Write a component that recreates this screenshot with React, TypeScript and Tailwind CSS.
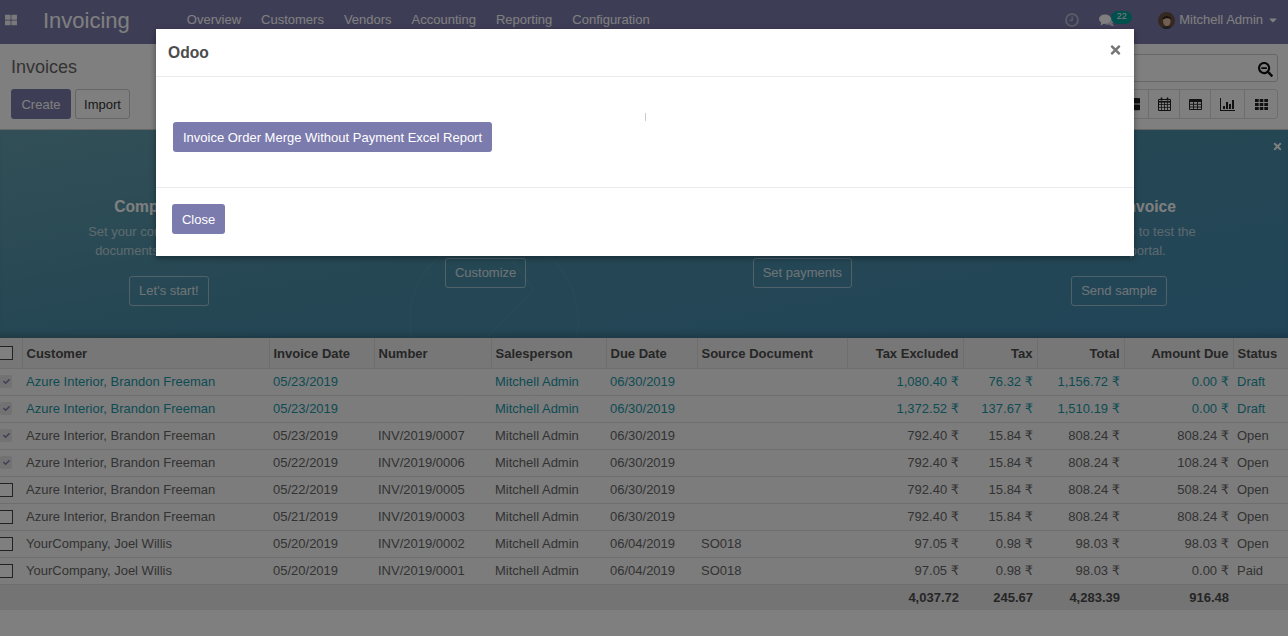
import { FaThLarge, FaSearchMinus, FaTimes, FaCheck, FaCaretDown } from "react-icons/fa";

const menu = ["Overview", "Customers", "Vendors", "Accounting", "Reporting", "Configuration"];

const columns = [
  { label: "Customer", width: 247 },
  { label: "Invoice Date", width: 105 },
  { label: "Number", width: 117 },
  { label: "Salesperson", width: 115 },
  { label: "Due Date", width: 91 },
  { label: "Source Document", width: 150 },
  { label: "Tax Excluded", width: 116, right: true },
  { label: "Tax", width: 74, right: true },
  { label: "Total", width: 87, right: true },
  { label: "Amount Due", width: 109, right: true },
  { label: "Status", width: 55 },
];

const azure = "Azure Interior, Brandon Freeman";
const joel = "YourCompany, Joel Willis";

const rows = [
  { checked: true, draft: true, cells: [azure, "05/23/2019", "", "Mitchell Admin", "06/30/2019", "", "1,080.40 ₹", "76.32 ₹", "1,156.72 ₹", "0.00 ₹", "Draft"] },
  { checked: true, draft: true, cells: [azure, "05/23/2019", "", "Mitchell Admin", "06/30/2019", "", "1,372.52 ₹", "137.67 ₹", "1,510.19 ₹", "0.00 ₹", "Draft"] },
  { checked: true, cells: [azure, "05/23/2019", "INV/2019/0007", "Mitchell Admin", "06/30/2019", "", "792.40 ₹", "15.84 ₹", "808.24 ₹", "808.24 ₹", "Open"] },
  { checked: true, cells: [azure, "05/22/2019", "INV/2019/0006", "Mitchell Admin", "06/30/2019", "", "792.40 ₹", "15.84 ₹", "808.24 ₹", "108.24 ₹", "Open"] },
  { cells: [azure, "05/22/2019", "INV/2019/0005", "Mitchell Admin", "06/30/2019", "", "792.40 ₹", "15.84 ₹", "808.24 ₹", "508.24 ₹", "Open"] },
  { cells: [azure, "05/21/2019", "INV/2019/0003", "Mitchell Admin", "06/30/2019", "", "792.40 ₹", "15.84 ₹", "808.24 ₹", "808.24 ₹", "Open"] },
  { cells: [joel, "05/20/2019", "INV/2019/0002", "Mitchell Admin", "06/04/2019", "SO018", "97.05 ₹", "0.98 ₹", "98.03 ₹", "98.03 ₹", "Open"] },
  { cells: [joel, "05/20/2019", "INV/2019/0001", "Mitchell Admin", "06/04/2019", "SO018", "97.05 ₹", "0.98 ₹", "98.03 ₹", "0.00 ₹", "Paid"] },
];

const onboarding = [
  { title: "Company Data", lines: ["Set your company's data for", "documents header/footer."], action: "Let's start!" },
  { title: "Invoice Layout", lines: ["Customize the look of your", ""], action: "Customize", short: true },
  { title: "Payment Method", lines: ["Set up your payment methods", ""], action: "Set payments", short: true },
  { title: "Sample Invoice", lines: ["Send an invoice to test the", "customer portal."], action: "Send sample" },
];

const Unchecked = () => <div className="-ml-px h-[14px] w-[14px] border border-[#444] bg-white" />;

const Checked = () => (
  <div className="flex h-[13px] w-[12px] items-center justify-center rounded-[2px] bg-[#e4e4e4] text-[#7c7bad]">
    <FaCheck className="h-[7px] w-[7px]" />
  </div>
);

// amounts carry the rupee sign in a wider face than the digits
function Cell({ value }: { value: string }) {
  if (!value.endsWith(" ₹")) return <>{value}</>;
  return (
    <>
      {value.slice(0, -1)}
      <span className="font-['DejaVu_Sans',sans-serif] text-[13px]">₹</span>
    </>
  );
}

function Avatar() {
  return (
    <svg viewBox="0 0 16 16" className="h-[17px] w-[17px] rounded-full">
      <rect width="16" height="16" fill="#6a5040" />
      <ellipse cx="8.3" cy="8.5" rx="3.6" ry="4.8" fill="#e4bfa4" />
      <path d="M4.2 7.5C4 2.6 12.4 2.4 12.4 7.5 11 5.4 6.4 5.4 4.2 7.5Z" fill="#2a1c14" />
      <path d="M2.5 16c1-3.4 10-3.4 11 0Z" fill="#3a3a3a" />
    </svg>
  );
}

const ClockIcon = () => (
  <svg viewBox="0 0 14 14" className="h-[14px] w-[14px] opacity-50" fill="none" stroke="currentColor">
    <circle cx="7" cy="7" r="6" strokeWidth="1.6" />
    <path d="M7.2 3.5V7.4H4.5" strokeWidth="1.2" />
  </svg>
);

const CommentsIcon = () => (
  <svg viewBox="0 0 15 13" className="h-[13px] w-[15px]" fill="currentColor">
    <path d="M13.5 9.5 15 12.5 10 11Z" opacity="0.7" />
    <ellipse cx="9" cy="7" rx="5.5" ry="3.8" opacity="0.7" />
    <ellipse cx="6" cy="5" rx="6" ry="4.5" />
    <path d="M2.5 7.5 1.6 11.4 6 9Z" />
  </svg>
);

const CalendarIcon = () => (
  <svg viewBox="0 0 13 14" className="h-[14px] w-[13px]" fill="none" stroke="currentColor" strokeWidth="1">
    <path d="M.5 2.5h12v11H.5Z" />
    <path d="M.5 4.8h12" strokeWidth="1.6" />
    <path d="M.5 7.5h12M.5 10.4h12M3.5 5v8.500M6.500 5v8.500M9.500 5v8.500" strokeWidth="0.8" />
    <path d="M3.500 0.500v3M9.500 0.500v3" strokeWidth="1.600" />
  </svg>
);

const TableIcon = () => (
  <svg viewBox="0 0 13 11" className="h-[11px] w-[13px]" fill="none" stroke="currentColor">
    <path d="M.5.500h12v10H.5Z" />
    <path d="M.5 2h12" strokeWidth="2" />
    <path d="M.5 5.300h12M.5 8h12M4.500 1v9.500M8.500 1v9.500" strokeWidth="0.9" />
  </svg>
);

const ChartIcon = () => (
  <svg viewBox="0 0 15 13" className="h-[13px] w-[15px]" fill="currentColor">
    <path d="M0 0h1v12h14v1H0Z" />
    <path d="M3 8h2v3H3ZM6 4h2v7H6ZM9 6h2v5H9ZM12 2h2v9h-2Z" />
  </svg>
);

const GridIcon = () => (
  <svg viewBox="0 0 13 11" className="h-[11px] w-[13px]" fill="currentColor">
    <path d="M0 0h3.700v3H0ZM4.700 0h3.600v3H4.700ZM9.300 0H13v3H9.300ZM0 4h3.700v3H0ZM4.700 4h3.600v3H4.700ZM9.300 4H13v3H9.300ZM0 8h3.700v3H0ZM4.700 8h3.600v3H4.700ZM9.300 8H13v3H9.300Z" />
  </svg>
);

export default function App() {
  return (
    <div className="relative h-[636px] w-[1288px] overflow-hidden bg-white font-['Liberation_Sans',Arial,sans-serif] text-[13px] text-[#666]">
      {/* Navbar */}
      <nav className="flex h-[44px] items-center bg-[#7c7bad] pb-[4px] text-white">
        <FaThLarge className="ml-[5px] h-[12px] w-[12px] opacity-90" />
        <span className="ml-[26px] text-[22px]">Invoicing</span>
        <div className="ml-[57px] flex gap-[20px]">
          {menu.map((m) => (
            <span key={m}>{m}</span>
          ))}
        </div>
        <div className="ml-auto flex items-center pr-[10px]">
          <ClockIcon />
          <div className="relative ml-[20px] flex w-[34px]">
            <CommentsIcon />
            <span className="absolute -top-[3px] left-[12px] flex h-[13px] w-[21px] items-center justify-center rounded-full bg-[#00a09d] text-[9px]">22</span>
          </div>
          <div className="ml-[25px] flex">
            <Avatar />
          </div>
          <span className="ml-[4px]">Mitchell Admin</span>
          <FaCaretDown className="ml-[5px] h-[12px] w-[10px]" />
        </div>
      </nav>

      {/* Control panel */}
      <div className="h-[86px] border-b border-[#ccc] bg-[#fff] pl-[11px] pr-[10px]">
        <div className="flex h-[45px] items-start justify-between">
          <span className="mt-[11px] text-[18px] leading-[24px] text-[#666]">Invoices</span>
          <div className="mt-[10px] flex h-[28px] w-[400px] items-center justify-end rounded-[3px] border border-[#ccc] pr-[4px] text-[#111]">
            <FaSearchMinus className="mt-[3px] h-[15px] w-[15px]" />
          </div>
        </div>
        <div className="flex items-center justify-between">
          <div className="flex gap-[4px]">
            <button className="h-[30px] w-[60px] rounded-[3px] bg-[#7c7bad] pt-px text-white">Create</button>
            <button className="h-[30px] w-[55px] rounded-[3px] border border-[#ccc] pt-px text-[#333]">Import</button>
          </div>
          <div className="flex h-[30px] rounded-[3px] border border-[#ddd] text-[#222]">
            <div className="flex w-[31px] items-center justify-center border-r border-[#ddd]"><FaThLarge className="h-[14px] w-[14px]" /></div>
            <div className="flex w-[31px] items-center justify-center border-r border-[#ddd]"><CalendarIcon /></div>
            <div className="flex w-[31px] items-center justify-center border-r border-[#ddd]"><TableIcon /></div>
            <div className="flex w-[34px] items-center justify-center border-r border-[#ddd]"><ChartIcon /></div>
            <div className="flex w-[32px] items-center justify-center"><GridIcon /></div>
          </div>
        </div>
      </div>

      {/* Onboarding banner */}
      <section className="relative grid h-[208px] grid-cols-4 bg-[linear-gradient(170deg,#659fae_0%,#4c8fa8_45%,#438ab0_100%)] px-[10.5px] text-white shadow-[inset_0_-8px_8px_-6px_rgba(0,0,0,0.25)]">
        <FaTimes className="absolute right-[5px] top-[11px] h-[11px] w-[11px]" />
        <svg viewBox="0 0 180 180" className="absolute left-[404px] top-[100px] h-[180px] w-[180px] opacity-[0.03]" fill="none" stroke="#fff" strokeWidth="2">
          <circle cx="90" cy="90" r="84" />
          <path d="M90 6 130 60 60 130" />
        </svg>
        {onboarding.map((o) => (
          <div key={o.action} className="relative flex flex-col items-center">
            <h3 className="mt-[68px] text-[15.6px] font-bold leading-[18px]">{o.title}</h3>
            <p className="mt-[6px] text-center text-[13px] leading-[19px] opacity-60">
              {o.lines[0]}
              {o.lines[1] && <br />}
              {o.lines[1]}
            </p>
            <button className={`${o.short ? "mt-[17px]" : "mt-[16px]"} h-[30px] rounded-[3px] border border-white/60 px-[9px] opacity-80`}>{o.action}</button>
          </div>
        ))}
      </section>

      {/* Invoice list */}
      <table className="w-[1288px] table-fixed border-collapse">
        <colgroup>
          <col className="w-[22px]" />
          {columns.map((c) => (
            <col key={c.label} style={{ width: c.width }} />
          ))}
        </colgroup>
        <thead>
          <tr className="h-[30px] bg-[#eee] text-[#4c4c4c]">
            <th className="p-0"><Unchecked /></th>
            {columns.map((c) => (
              <th key={c.label} className={`border-l border-[#ddd] px-[4px] pt-px font-bold ${c.right ? "text-right" : "text-left"}`}>{c.label}</th>
            ))}
          </tr>
        </thead>
        <tbody>
          {rows.map((r, i) => (
            <tr key={i} className={`h-[27px] border-t border-[#ddd] bg-[#f9f9f9] ${r.draft ? "text-[#1a98a8]" : "text-[#666]"}`}>
              <td className="p-0">{r.checked ? <Checked /> : <Unchecked />}</td>
              {r.cells.map((c, j) => (
                <td key={j} className={`overflow-hidden whitespace-nowrap px-[4px] ${columns[j].right ? "text-right" : "text-left"}`}><Cell value={c} /></td>
              ))}
            </tr>
          ))}
        </tbody>
        <tfoot>
          <tr className="h-[26px] border-t border-[#ddd] bg-[#e8e8e8] font-bold text-[#4c4c4c]">
            <td colSpan={7} />
            <td className="px-[4px] text-right">4,037.72</td>
            <td className="px-[4px] text-right">245.67</td>
            <td className="px-[4px] text-right">4,283.39</td>
            <td className="px-[4px] text-right">916.48</td>
            <td />
          </tr>
        </tfoot>
      </table>

      {/* Backdrop */}
      <div className="absolute inset-0 bg-black/50" />

      {/* Dialog */}
      <div className="absolute left-[156px] top-[29px] w-[978px] bg-white text-[#4c4c4c] shadow-[0_2px_6px_rgba(0,0,0,0.4)]">
        <header className="flex h-[48px] items-center justify-between border-b border-[#e9ecef] pl-[12px] pr-[12px]">
          <h4 className="text-[15.6px] font-bold leading-none">Odoo</h4>
          <FaTimes className="mb-[5px] h-[14px] w-[13px] text-[#777]" />
        </header>
        <div className="relative h-[111px] border-b border-[#e9ecef] pl-[17px] pt-[45px]">
          <div className="absolute left-[489px] top-[36px] h-[8px] w-px bg-[#ccc]" />
          <button className="h-[30px] w-[319px] rounded-[3px] bg-[#7c7bad] pt-px text-white">Invoice Order Merge Without Payment Excel Report</button>
        </div>
        <footer className="h-[68px] pl-[16px] pt-[16px]">
          <button className="h-[30px] w-[53px] rounded-[3px] bg-[#7c7bad] pt-px text-white">Close</button>
        </footer>
      </div>
    </div>
  );
}
